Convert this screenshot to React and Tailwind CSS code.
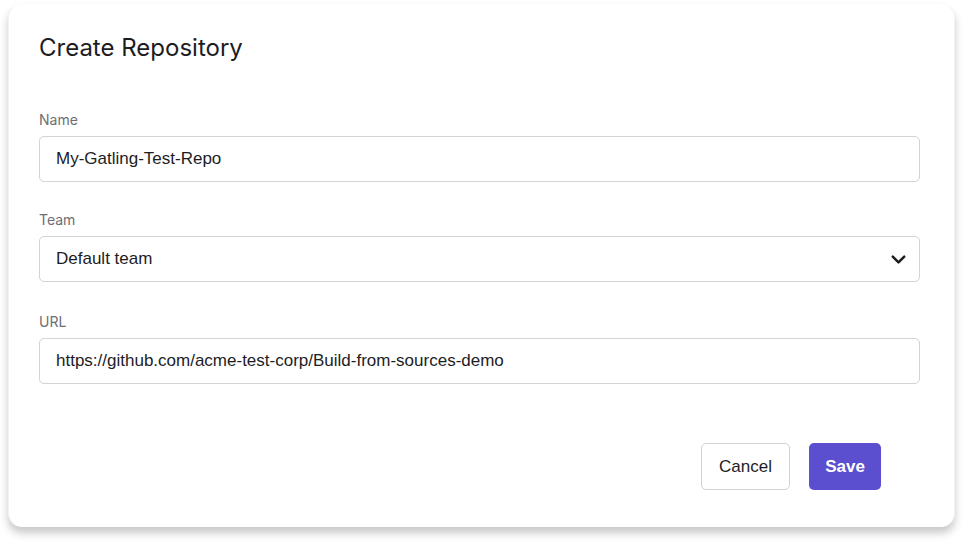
import { ChevronDown } from "lucide-react";

const sans = { fontFamily: '"Liberation Sans", Arial, sans-serif' };

const Field = ({ label, className = "", children }) => (
  <div className={`flex flex-col ${className}`}>
    <label className="text-[14px] leading-4 text-[#6e6e73] mb-[8px]" style={{ fontFamily: "Inter, sans-serif" }}>
      {label}
    </label>
    {children}
  </div>
);

const TextInput = ({ value }) => (
  <div
    className="h-[46px] flex items-center px-4 border border-[#d2d2d7] rounded-[5px] text-[17px] text-[#1d1d1f] bg-white"
    style={sans}
  >
    {value}
  </div>
);

export default function App() {
  return (
    <div className="w-[963px] h-[543px] bg-white pt-[4px] pl-[8px] pr-[8px]">
      <div className="w-[947px] h-[523px] bg-white rounded-[14px] shadow-[0_6px_9px_rgba(0,0,0,0.22)] border-l border-r border-[#f2f2f2] pl-[30px] pr-[34px] pt-[30px] flex flex-col">
        <h1 className="text-[24px] leading-7 text-[#1d1d1f] font-normal" style={{ fontFamily: "Inter, sans-serif" }}>
          Create Repository
        </h1>

        <div className="flex flex-col mt-[50px]">
          <Field label="Name">
            <TextInput value="My-Gatling-Test-Repo" />
          </Field>
          <Field label="Team" className="mt-[30px]">
            <div
              className="h-[46px] flex items-center justify-between pl-4 pr-[9px] border border-[#d2d2d7] rounded-[5px] text-[17px] text-[#1d1d1f]"
              style={sans}
            >
              <span>Default team</span>
              <ChevronDown size={23} strokeWidth={2.6} className="text-[#1d1d1f]" />
            </div>
          </Field>
          <Field label="URL" className="mt-[32px]">
            <TextInput value="https://github.com/acme-test-corp/Build-from-sources-demo" />
          </Field>
        </div>

        <div className="flex justify-end gap-[19px] mt-[59px] pr-[39px]">
          <button
            className="h-[47px] w-[89px] border border-[#d2d2d7] rounded-[5px] text-[17px] text-[#1d1d1f] bg-white"
            style={sans}
          >
            Cancel
          </button>
          <button
            className="h-[47px] w-[72px] rounded-[5px] text-[17px] font-bold text-white bg-[#5b4fcf]"
            style={sans}
          >
            Save
          </button>
        </div>
      </div>
    </div>
  );
}
